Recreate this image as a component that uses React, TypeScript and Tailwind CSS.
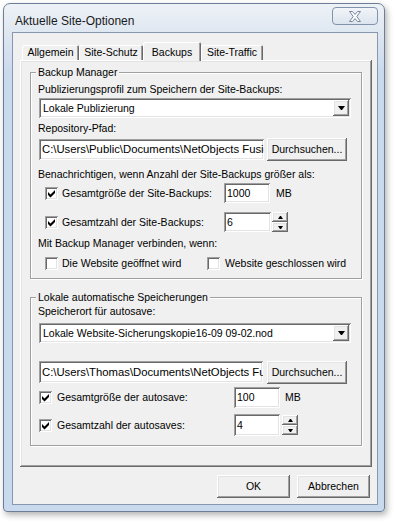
import React from "react";

const sunken =
  "shadow-[inset_1px_1px_#a0a0a0,inset_-1px_-1px_#ffffff,inset_2px_2px_#696969,inset_-2px_-2px_#e3e3e3]";
const raised =
  "shadow-[inset_-1px_-1px_#696969,inset_1px_1px_#ffffff,inset_-2px_-2px_#a0a0a0,inset_2px_2px_#e3e3e3]";
const etched = "border border-[#a0a0a0] shadow-[inset_1px_1px_#ffffff,1px_1px_#ffffff]";

const Check = ({ checked }: { checked?: boolean }) => (
  <div className={`h-[13px] w-[13px] shrink-0 bg-white ${sunken}`}>
    {checked && (
      <svg width="13" height="13" viewBox="0 0 13 13" className="block">
        <polygon points="3,5 5.5,7.5 10,3 10,6 5.5,10.5 3,8" fill="#000" />
      </svg>
    )}
  </div>
);

const Arrow = () => (
  <svg width="7" height="4" viewBox="0 0 7 4" className="block">
    <polygon points="0,0 7,0 4,4 3,4" fill="#000" />
  </svg>
);

const Combo = ({ text }: { text: string }) => (
  <div className={`ml-px flex h-[20px] w-[312px] items-center bg-white pl-[4px] pr-[2px] ${sunken}`}>
    <span className="flex-1 overflow-hidden whitespace-nowrap">{text}</span>
    <div className={`flex h-[16px] w-[16px] items-center justify-center bg-[#f0f0f0] ${raised}`}>
      <Arrow />
    </div>
  </div>
);

const Field = ({ text, w }: { text: string; w: string }) => (
  <div className={`flex h-[20px] items-center overflow-hidden whitespace-nowrap bg-white pl-[3px] ${w} ${sunken}`}>
    {text}
  </div>
);

const Button = ({ label, w, h }: { label: string; w: string; h: string }) => (
  <button className={`flex items-center justify-center bg-[#f0f0f0] ${w} ${h} ${raised}`}>{label}</button>
);

const Spinner = ({ ml }: { ml: string }) => (
  <div className={`flex w-[16px] flex-col ${ml}`}>
    <div className={`flex h-[10px] items-center justify-center bg-[#f0f0f0] ${raised}`}>
      <svg width="5" height="3" viewBox="0 0 5 3" className="block">
        <polygon points="2,0 3,0 5,3 0,3" fill="#000" />
      </svg>
    </div>
    <div className={`flex h-[10px] items-center justify-center bg-[#f0f0f0] ${raised}`}>
      <svg width="5" height="3" viewBox="0 0 5 3" className="block">
        <polygon points="0,0 5,0 3,3 2,3" fill="#000" />
      </svg>
    </div>
  </div>
);

const tabs = [
  { label: "Allgemein", w: "w-[57px]" },
  { label: "Site-Schutz", w: "w-[64px]" },
  { label: "Backups", w: "w-[58px]", active: true },
  { label: "Site-Traffic", w: "w-[62px]" },
];

export default function App() {
  return (
    <div className="h-[524px] w-[395px] bg-white pl-[3px] pt-[3px] font-['Liberation_Sans',Arial,sans-serif] text-[10.5px] leading-[13px] text-black">
      <div className="flex h-[509px] w-[382px] flex-col rounded-t-[7px] rounded-b-[4px] border border-[#6e7e96] bg-[linear-gradient(to_bottom,#eef2f7_0px,#dfe7f1_28px,#c9d9ee_70px,#c9d9ee_100%)] shadow-[2px_3px_6px_rgba(0,0,0,0.3)]">
        {/* title bar */}
        <div className="flex h-[28px] shrink-0 items-start justify-between">
          <span className="pl-[11px] pt-[10px] text-[12px] leading-[14px] text-[#1a1a1a]">Aktuelle Site-Optionen</span>
          <div className="mr-[6px] mt-[3px] flex h-[18px] w-[46px] items-center justify-center rounded-[4px] border border-[#8393ab] bg-[linear-gradient(to_bottom,#f2f5f9,#dce4ee)]">
            <svg width="14" height="11" viewBox="0 0 14 11">
              <polygon
                points="1.5,0.5 4.5,0.5 7,3.5 9.5,0.5 12.5,0.5 8.8,5.5 12.5,10.5 9.5,10.5 7,7.5 4.5,10.5 1.5,10.5 5.2,5.5"
                fill="#ffffff"
                stroke="#77869c"
                strokeWidth="1"
              />
            </svg>
          </div>
        </div>

        {/* client area */}
        <div className="ml-[8px] h-[473px] w-[366px] border border-[#8797ae] bg-[#f0f0f0] pl-[7px] pt-[9px]">
          {/* tabs */}
          <div className="flex h-[18px] items-end pl-[2px]">
            {tabs.map((t) =>
              t.active ? (
                <div
                  key={t.label}
                  className={`relative z-10 -mb-px flex h-[19px] justify-center rounded-t-[2px] bg-[#f0f0f0] pt-[4px] ${t.w} shadow-[inset_1px_1px_#ffffff,inset_-1px_0_#696969,inset_-2px_0_#a0a0a0]`}
                >
                  {t.label}
                </div>
              ) : (
                <div
                  key={t.label}
                  className={`flex h-[15px] justify-center rounded-t-[2px] pt-[1px] ${t.w} shadow-[inset_1px_1px_#ffffff,inset_-1px_0_#696969,inset_-2px_0_#a0a0a0]`}
                >
                  {t.label}
                </div>
              )
            )}
          </div>

          {/* tab panel */}
          <div className={`h-[407px] w-[352px] pl-[10px] pt-[12px] ${raised}`}>
            {/* Backup Manager */}
            <div className={`h-[207px] w-[332px] pl-[7px] ${etched}`}>
              <span className="-mt-[7px] ml-[-2px] block w-fit bg-[#f0f0f0] px-[2px]">Backup Manager</span>
              <div className="mt-[4px]">Publizierungsprofil zum Speichern der Site-Backups:</div>
              <div className="mt-[2px]">
                <Combo text="Lokale Publizierung" />
              </div>
              <div className="mt-[4px]">Repository-Pfad:</div>
              <div className="mt-[3px] flex items-start">
                <div className="ml-px mt-px">
                  <Field text="C:\Users\Public\Documents\NetObjects Fusion" w="w-[225px] h-[21px] text-[11.3px]" />
                </div>
                <div className="ml-[3px]">
                  <Button label="Durchsuchen..." w="w-[80px]" h="h-[23px]" />
                </div>
              </div>
              <div className="mt-[7px]">Benachrichtigen, wenn Anzahl der Site-Backups größer als:</div>
              <div className="mt-[2px] flex items-center">
                <div className="flex w-[186px] items-center pl-[7px]">
                  <Check checked />
                  <span className="ml-[4px]">Gesamtgröße der Site-Backups:</span>
                </div>
                <Field text="1000" w="w-[46px]" />
                <span className="ml-[6px]">MB</span>
              </div>
              <div className="mt-[9px] flex items-center">
                <div className="flex w-[186px] items-center pl-[7px]">
                  <Check checked />
                  <span className="ml-[4px]">Gesamtzahl der Site-Backups:</span>
                </div>
                <Field text="6" w="w-[47px]" />
                <Spinner ml="ml-px" />
              </div>
              <div className="mt-[5px]">Mit Backup Manager verbinden, wenn:</div>
              <div className="mt-[7px] flex items-center">
                <div className="flex w-[169px] items-center pl-[7px]">
                  <Check />
                  <span className="ml-[4px]">Die Website geöffnet wird</span>
                </div>
                <Check />
                <span className="ml-[5px]">Website geschlossen wird</span>
              </div>
            </div>

            {/* Lokale automatische Speicherungen */}
            <div className={`mt-[18px] h-[149px] w-[332px] pl-[7px] ${etched}`}>
              <span className="-mt-[7px] ml-[-2px] block w-fit bg-[#f0f0f0] px-[2px]">
                Lokale automatische Speicherungen
              </span>
              <div className="mt-[1px]">Speicherort für autosave:</div>
              <div className="mt-[5px]">
                <Combo text="Lokale Website-Sicherungskopie16-09 09-02.nod" />
              </div>
              <div className="mt-[18px] flex items-start">
                <div className="ml-px">
                  <Field text="C:\Users\Thomas\Documents\NetObjects Fusion" w="w-[224px] h-[22px] text-[11.3px]" />
                </div>
                <div className="ml-[4px]">
                  <Button label="Durchsuchen..." w="w-[80px]" h="h-[23px]" />
                </div>
              </div>
              <div className="mt-[3px] flex items-center">
                <div className="flex w-[196px] items-center pl-px">
                  <Check checked />
                  <span className="ml-[5px]">Gesamtgröße der autosave:</span>
                </div>
                <Field text="100" w="w-[46px] h-[21px]" />
                <span className="ml-[5px]">MB</span>
              </div>
              <div className="mt-[6px] flex items-center">
                <div className="flex w-[196px] items-center pl-px">
                  <Check checked />
                  <span className="ml-[5px]">Gesamtzahl der autosaves:</span>
                </div>
                <Field text="4" w="w-[46px] h-[22px]" />
                <Spinner ml="ml-[2px]" />
              </div>
            </div>
          </div>

          {/* dialog buttons */}
          <div className="mt-[8px] flex justify-end gap-[7px] pr-[7px]">
            <Button label="OK" w="w-[73px]" h="h-[23px]" />
            <Button label="Abbrechen" w="w-[73px]" h="h-[23px]" />
          </div>
        </div>
      </div>
    </div>
  );
}
